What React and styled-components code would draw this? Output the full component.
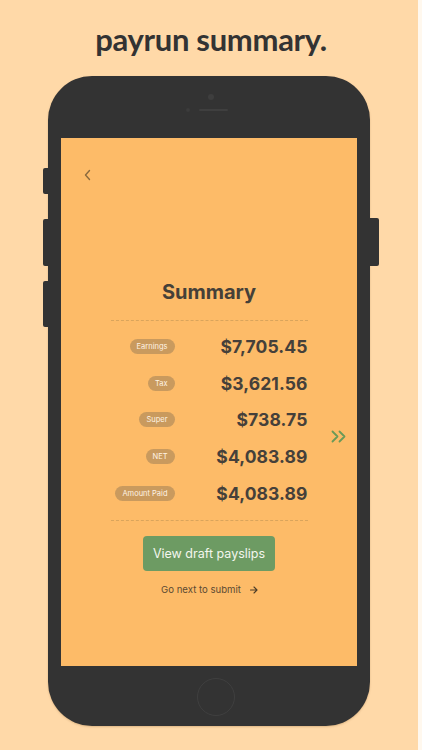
import React from "react";
import styled, { createGlobalStyle } from "styled-components";

const Global = createGlobalStyle`
  html, body { margin: 0; padding: 0; background: #fff8ee; }
  body { font-family: "Inter", "Noto Sans", sans-serif; }
`;

const Page = styled.div`
  width: 418px;
  height: 750px;
  background: #ffd9a8;
  display: flex;
  flex-direction: column;
  align-items: flex-start;
  overflow: hidden;
`;

const Title = styled.h1`
  margin: 0;
  width: 100%;
  padding-top: 20px;
  height: 54px;
  box-sizing: border-box;
  text-align: center;
  font-family: "Lato", sans-serif;
  font-weight: 700;
  font-size: 31px;
  line-height: 38px;
  color: #333333;
  letter-spacing: -0.3px;
  padding-left: 4px;
`;

const Phone = styled.div`
  position: relative;
  margin-top: 22px;
  margin-left: 48px;
  width: 322px;
  height: 650px;
  background: #333333;
  border-radius: 44px;
  box-shadow: 0 1px 2px rgba(120, 80, 30, 0.25);
  display: flex;
  flex-direction: column;
  align-items: center;
`;

const SideButton = styled.div`
  position: absolute;
  top: ${(p) => p.$top}px;
  height: ${(p) => p.$h}px;
  width: ${(p) => p.$w}px;
  ${(p) => (p.$right ? `right: -${p.$w}px;` : `left: -${p.$w}px;`)}
  background: #333333;
  border-radius: ${(p) => (p.$right ? "0 2px 2px 0" : "2px 0 0 2px")};
`;

const TopBezel = styled.div`
  height: 62px;
  width: 100%;
  position: relative;
`;

const Camera = styled.div`
  position: absolute;
  left: 160px;
  top: 18px;
  width: 6px;
  height: 6px;
  border-radius: 50%;
  background: #3e3e3e;
`;

const SensorDot = styled.div`
  position: absolute;
  left: 138px;
  top: 32px;
  width: 4px;
  height: 4px;
  border-radius: 50%;
  background: #3c3c3c;
`;

const Speaker = styled.div`
  position: absolute;
  left: 151px;
  top: 33px;
  width: 29px;
  height: 2px;
  border-radius: 1px;
  background: #3f3f3f;
`;

const Screen = styled.div`
  position: relative;
  width: 296px;
  height: 528px;
  background: #fdbb68;
  display: flex;
  flex-direction: column;
  align-items: center;
`;

const BackBtn = styled.div`
  align-self: flex-start;
  margin-top: 31px;
  margin-left: 21px;
  width: 12px;
  height: 12px;
  display: flex;
`;

const Summary = styled.h2`
  margin: 99px 0 0 0;
  font-family: "Inter", sans-serif;
  font-weight: 700;
  font-size: 20px;
  line-height: 24px;
  color: #454038;
`;

const Content = styled.div`
  width: 197px;
  margin-top: 16px;
  display: flex;
  flex-direction: column;
`;

const Dashed = styled.div`
  height: 0;
  border-top: 1px dashed #d9a45c;
`;

const Rows = styled.div`
  padding: 7px 0 8px;
  display: flex;
  flex-direction: column;
`;

const Row = styled.div`
  height: 36.75px;
  display: grid;
  grid-template-columns: 64px 1fr;
  align-items: center;
`;

const Pill = styled.span`
  justify-self: end;
  background: #c99a5e;
  color: #fff3e3;
  font-family: "Inter", sans-serif;
  font-size: 7.5px;
  line-height: 15px;
  height: 15px;
  padding: 0 7px;
  border-radius: 8px;
  white-space: nowrap;
`;

const Amount = styled.span`
  text-align: right;
  font-family: "Inter", sans-serif;
  font-weight: 700;
  font-size: 17.5px;
  color: #45403a;
  letter-spacing: 0.1px;
`;

const NextArrow = styled.div`
  position: absolute;
  right: 10px;
  top: 292px;
  width: 16px;
  height: 13px;
  display: flex;
`;

const PrimaryButton = styled.button`
  margin-top: 15px;
  width: 132px;
  height: 35px;
  border: none;
  border-radius: 4px;
  background: #6d9b63;
  color: #f3f6ee;
  font-family: "Inter", sans-serif;
  font-size: 12.5px;
  cursor: pointer;
  padding: 0;
`;

const NextLink = styled.div`
  margin-top: 12px;
  display: flex;
  align-items: center;
  gap: 8px;
  font-family: "Inter", sans-serif;
  font-size: 9.6px;
  line-height: 14px;
  color: #5b4a33;
  padding-left: 2px;
`;

const BottomBezel = styled.div`
  flex: 1;
  width: 100%;
  display: flex;
  align-items: center;
  justify-content: center;
`;

const HomeButton = styled.div`
  margin-left: 14px;
  margin-top: 1px;
  width: 36px;
  height: 36px;
  border-radius: 50%;
  border: 1.5px solid #3f3f3f;
`;

const rows = [
  ["Earnings", "$7,705.45"],
  ["Tax", "$3,621.56"],
  ["Super", "$738.75"],
  ["NET", "$4,083.89"],
  ["Amount Paid", "$4,083.89"],
];

export default function App() {
  return (
    <>
      <Global />
      <Page>
        <Title>payrun summary.</Title>
        <Phone>
          <SideButton $top={92} $h={26} $w={5} />
          <SideButton $top={143} $h={47} $w={5} />
          <SideButton $top={205} $h={46} $w={5} />
          <SideButton $right $top={142} $h={48} $w={9} />
          <TopBezel>
            <Camera />
            <SensorDot />
            <Speaker />
          </TopBezel>
          <Screen>
            <BackBtn>
              <svg width="12" height="12" viewBox="0 0 12 12">
                <path d="M7.5 1.5 L3.5 6 L7.5 10.5" fill="none" stroke="#8a6a3e" strokeWidth="1.4" strokeLinecap="round" strokeLinejoin="round" />
              </svg>
            </BackBtn>
            <Summary>Summary</Summary>
            <Content>
              <Dashed />
              <Rows>
                {rows.map(([label, value]) => (
                  <Row key={label}>
                    <Pill>{label}</Pill>
                    <Amount>{value}</Amount>
                  </Row>
                ))}
              </Rows>
              <Dashed />
            </Content>
            <NextArrow>
              <svg width="16" height="13" viewBox="0 0 16 13">
                <path d="M1.5 1.5 L6.5 6.5 L1.5 11.5 M8.5 1.5 L13.5 6.5 L8.5 11.5" fill="none" stroke="#6a9a58" strokeWidth="1.8" strokeLinecap="round" strokeLinejoin="round" />
              </svg>
            </NextArrow>
            <PrimaryButton>View draft payslips</PrimaryButton>
            <NextLink>
              <span>Go next to submit</span>
              <svg width="10" height="10" viewBox="0 0 10 10">
                <path d="M1.5 5 H8 M5 2 L8 5 L5 8" fill="none" stroke="#4a3c28" strokeWidth="1.1" strokeLinecap="round" strokeLinejoin="round" />
              </svg>
            </NextLink>
          </Screen>
          <BottomBezel>
            <HomeButton />
          </BottomBezel>
        </Phone>
      </Page>
    </>
  );
}
